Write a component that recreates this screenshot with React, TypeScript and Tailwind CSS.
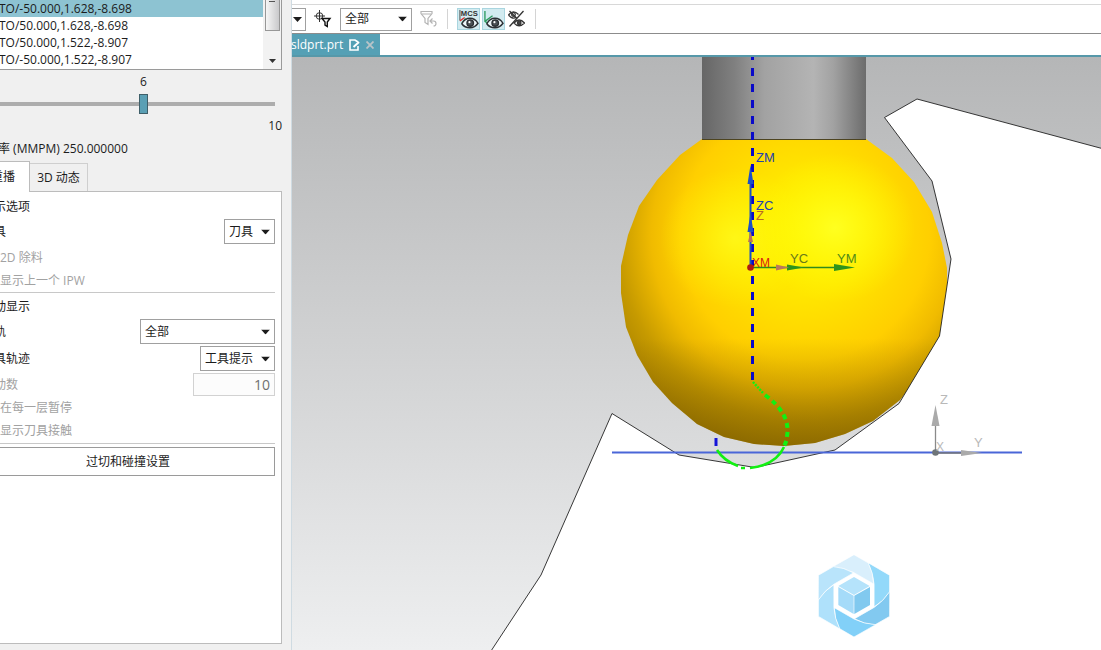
import { useState } from 'react';
import type { ReactNode } from 'react';

const PATH_LINES = [
    'TO/-50.000,1.628,-8.698',
    'TO/50.000,1.628,-8.698',
    'TO/50.000,1.522,-8.907',
    'TO/-50.000,1.522,-8.907',
];

function Caret({ className }: { className?: string }) {
    return (
        <svg className={className} width="9" height="5" viewBox="0 0 9 5" aria-hidden="true">
            <path d="M0 0h9L4.500 5z" fill="#1c1c1c" />
        </svg>
    );
}

function Dropdown({ id, label, options, className }: { id: string; label?: string; options: string[]; className: string }) {
    return (
        <div className={`relative shrink-0 ${className}`}>
            <select
                id={id}
                aria-label={label}
                className="block h-full w-full appearance-none border border-[#a0a0a0] bg-white pl-1 text-xs text-[#1c1c1c] outline-none"
            >
                {options.map((option) => (
                    <option key={option}>{option}</option>
                ))}
            </select>
            <Caret className="pointer-events-none absolute top-1/2 right-[5px] -translate-y-1/2" />
        </div>
    );
}

function Row({ htmlFor, label, children }: { htmlFor: string; label: string; children: ReactNode }) {
    return (
        <div className="flex h-[27px] items-start justify-between pl-[13px]">
            <label htmlFor={htmlFor} className="leading-[25px]">
                {label}
            </label>
            {children}
        </div>
    );
}

function DisabledCheck({ label }: { label: string }) {
    return (
        <label className="flex h-[23px] items-center gap-[7px] text-[#a2a2a2]">
            <input type="checkbox" disabled className="size-3" />
            {label}
        </label>
    );
}

function Sidebar() {
    const [selected, setSelected] = useState(0);
    const [speed, setSpeed] = useState(6);
    const [tab, setTab] = useState('replay');

    return (
        <aside className="flex w-[292px] shrink-0 overflow-hidden border-r border-[#cfdbe2] bg-[#f0f0f0]">
            <div className="-ml-5 flex flex-1 flex-col text-xs text-[#1c1c1c]">
                <div className="mr-[9px] flex border-b border-r border-[#9a9a9a] bg-white">
                    <ul className="flex-1 pb-px">
                        {PATH_LINES.map((line, i) => (
                            <li key={line}>
                                <button
                                    type="button"
                                    onClick={() => setSelected(i)}
                                    className={`block h-[17px] w-full pl-[19px] text-left leading-[17px] ${selected === i ? 'bg-[#8dc3d2]' : ''}`}
                                >
                                    {line}
                                </button>
                            </li>
                        ))}
                    </ul>
                    <div className="flex w-[18px] flex-col items-center justify-between bg-[#f2f2f2] pb-1.5">
                        <div className="flex h-[31px] w-[15px] justify-center border border-t-0 border-[#979797] bg-linear-to-r from-[#f6f6f6] to-[#c9c9cb]">
                            <span className="mt-px h-px w-1.5 bg-[#555]" />
                        </div>
                        <svg width="7" height="4" viewBox="0 0 7 4" aria-hidden="true">
                            <path d="M0 0h7L3.500 4z" fill="#333" />
                        </svg>
                    </div>
                </div>

                <div className="mr-4 flex flex-col pt-1">
                    <output htmlFor="speed" className="pl-8 text-center leading-4">
                        {speed}
                    </output>
                    <input
                        id="speed"
                        aria-label="速度"
                        type="range"
                        min={1}
                        max={10}
                        value={speed}
                        onChange={(e) => setSpeed(Number(e.target.value))}
                        className="mt-1 h-5 w-full appearance-none bg-transparent [&::-webkit-slider-runnable-track]:h-1 [&::-webkit-slider-runnable-track]:bg-[#adadad] [&::-webkit-slider-thumb]:-mt-2 [&::-webkit-slider-thumb]:h-5 [&::-webkit-slider-thumb]:w-[9px] [&::-webkit-slider-thumb]:appearance-none [&::-webkit-slider-thumb]:border [&::-webkit-slider-thumb]:border-[#3f5f69] [&::-webkit-slider-thumb]:bg-[#5a9fb4]"
                    />
                </div>
                <p className="mt-1 mr-[9px] text-right leading-4">10</p>
                <p className="mt-[5px] pl-[18px] leading-5">率 (MMPM) 250.000000</p>

                <div className="mt-0.5 flex items-end" role="tablist">
                    <button
                        type="button"
                        role="tab"
                        aria-selected={tab === 'replay'}
                        onClick={() => setTab('replay')}
                        className="relative z-10 -mb-px h-[31px] w-[50px] border border-b-0 border-[#bcbcbc] bg-white pl-2.5 text-left"
                    >
                        重播
                    </button>
                    <button
                        type="button"
                        role="tab"
                        aria-selected={tab === 'dynamic'}
                        onClick={() => setTab('dynamic')}
                        className="h-7 w-[58px] border border-b-0 border-l-0 border-[#cfcfcf] bg-[#f0f0f0]"
                    >
                        3D 动态
                    </button>
                </div>

                <div className="mr-[9px] mb-1.5 flex-1 border border-[#bcbcbc] bg-white pt-[3px] pr-1.5">
                    <h2 className="h-6 pl-[13px] leading-6">示选项</h2>
                    <Row htmlFor="tool" label="具">
                        <Dropdown id="tool" options={['刀具']} className="h-[25px] w-[51px]" />
                    </Row>
                    <DisabledCheck label="2D 除料" />
                    <DisabledCheck label="显示上一个 IPW" />
                    <hr className="border-[#c8c8c8]" />

                    <h2 className="mt-0.5 h-6 pl-[13px] leading-6">动显示</h2>
                    <Row htmlFor="rail" label="轨">
                        <Dropdown id="rail" options={['全部']} className="h-[25px] w-[135px]" />
                    </Row>
                    <Row htmlFor="trace" label="具轨迹">
                        <Dropdown id="trace" options={['工具提示']} className="h-[25px] w-[75px]" />
                    </Row>
                    <div className="flex h-[23px] items-center justify-between pl-[13px]">
                        <label htmlFor="moves" className="text-[#a2a2a2]">
                            动数
                        </label>
                        <input
                            id="moves"
                            type="text"
                            disabled
                            defaultValue="10"
                            className="h-full w-[82px] border border-[#d2d2d2] bg-[#fcfcfc] pr-1 text-right text-sm text-[#707070]"
                        />
                    </div>
                    <DisabledCheck label="在每一层暂停" />
                    <DisabledCheck label="显示刀具接触" />
                    <hr className="mt-px border-[#c8c8c8]" />
                    <button type="button" className="mt-[3px] h-[29px] w-full border border-[#9a9a9a] bg-white">
                        过切和碰撞设置
                    </button>
                </div>
            </div>
        </aside>
    );
}

function Eye() {
    return (
        <g fill="none" stroke="#2c3034" strokeWidth="1.500">
            <path d="M4 15.500C6.500 11 9.500 9.800 12.500 9.800s6 1.200 8.500 5.200c-2.500 3.500-5 4.700-8.500 4.700s-6.500-1.200-8.500-4.200z" fill="#eef7f9" />
            <circle cx="12.800" cy="14.800" r="3.400" fill="#4c5256" />
            <circle cx="12" cy="13.800" r="1.100" fill="#fff" stroke="none" />
        </g>
    );
}

function Toolbar() {
    return (
        <div className="mt-1 flex h-[30px] items-center border-t border-b border-t-[#d8d8d8] border-b-[#8c8c8c] bg-white">
            <button type="button" aria-label="选择" className="flex h-[23px] w-3.5 items-center justify-center border border-l-0 border-[#a0a0a0] pr-0.5">
                <Caret />
            </button>
            <button type="button" aria-label="过滤器" className="ml-2">
                <svg width="18" height="18" viewBox="0 0 18 18" fill="none" stroke="#333" strokeWidth="1">
                    <circle cx="5.500" cy="6" r="3.300" />
                    <path d="M5.500 0v12M0 6h11" />
                    <path d="M8 8.500h8l-2.700 3.500v4.500l-2.300-1.500v-3z" fill="#fff" stroke="#111" strokeWidth="1.400" />
                </svg>
            </button>
            <Dropdown id="scope" label="范围" options={['全部']} className="ml-2 h-[23px] w-[72px]" />
            <button type="button" aria-label="重置过滤器" className="ml-2">
                <svg width="18" height="18" viewBox="0 0 18 18" fill="none" stroke="#b4b4b4" strokeWidth="1.200">
                    <path d="M1 1.500h11v2L8 8.500v6l-3-2v-4l-4-5z" />
                    <path d="M2 4h9M12.500 8.500L10 11l2.500 2.500M10.500 11h3q2.500 0 2.500 2.500t-2.500 2.500" />
                </svg>
            </button>
            <span className="ml-[9px] h-5 w-px bg-[#d4d4d4]" />
            <button type="button" aria-label="显示 MCS" className="ml-[9px] border border-[#a9d5df] bg-[#d2ebf0]">
                <svg width="21" height="20" viewBox="0 0 22 21">
                    <path d="M2 1v11" stroke="#444" />
                    <path d="M2 12.500l5-3.500" stroke="#d33" strokeWidth="1.400" />
                    <path d="M4 15l4-5" stroke="#2d9a5f" strokeWidth="1.400" />
                    <text x="3" y="7" fontSize="8" fontWeight="700" fill="#333" fontFamily="Liberation Sans">MCS</text>
                    <Eye />
                </svg>
            </button>
            <button type="button" aria-label="显示 WCS" className="ml-0.5 border border-[#a9d5df] bg-[#d2ebf0]">
                <svg width="21" height="20" viewBox="0 0 22 21" fill="none">
                    <path d="M2 2v11l6 4M2 13l8-6" stroke="#2d9a5f" strokeWidth="1.400" />
                    <Eye />
                </svg>
            </button>
            <button type="button" aria-label="反转显示" className="ml-[3px]">
                <svg width="17" height="18" viewBox="0 0 17 18" fill="none" stroke="#333" strokeWidth="1.300">
                    <path d="M.5 5Q5-1 10.500 4.500M.5 5Q5 10 8 7M1.500 16.500L15.500 1M1.500 1l7 7" />
                    <circle cx="5.500" cy="4.500" r="1.800" />
                    <path d="M6 13q5-6 10.500 0-5.500 5.500-10.500 0z" />
                    <circle cx="11.200" cy="13" r="1.800" fill="#444" />
                </svg>
            </button>
            <span className="ml-2.5 h-5 w-px bg-[#d4d4d4]" />
        </div>
    );
}

function PartTab() {
    return (
        <div className="flex h-[23px] border-b-2 border-[#5698a9] bg-white">
            <div className="flex items-center bg-[#55a0b5] pr-1.5 text-xs text-white">
                <span className="-ml-px leading-5">sldprt.prt</span>
                <svg className="ml-1.5" width="11" height="12" viewBox="0 0 11 12" fill="none" stroke="#fff" strokeWidth="1.600">
                    <path d="M9 7v4H1V1h5l3 2" />
                    <path d="M4.500 8L10 3" strokeWidth="2" />
                </svg>
                <button type="button" aria-label="关闭" className="ml-1.5">
                    <svg width="8" height="8" viewBox="0 0 8 8" stroke="#b9c4c8" strokeWidth="1.800">
                        <path d="M.5.5l7 7m0-7l-7 7" />
                    </svg>
                </button>
            </div>
        </div>
    );
}

const BLADES = [
    { fill: '#d9effc', rotate: 0 },
    { fill: '#93d9fa', rotate: 60 },
    { fill: '#82c9f0', rotate: 120 },
    { fill: '#82d0f8', rotate: 180 },
    { fill: '#afe1fb', rotate: 240 },
    { fill: '#b9e4fb', rotate: 300 },
];

function Logo() {
    return (
        <g transform="translate(800 540) scale(.3333)">
            {BLADES.map((blade) => (
                <path
                    key={blade.rotate}
                    d="M97 81L162 44l45 26q14 29 14 62L162 98Q132 83 97 81z"
                    fill={blade.fill}
                    stroke="#fff"
                    strokeWidth="2"
                    transform={`rotate(${blade.rotate} 162 167.500)`}
                />
            ))}
            <path d="M162 102l57 33v65l-57 34-57-34v-65z" fill="#fff" />
            <path d="M162 111l47 27-47 27-47-27z" fill="#b5e3fb" />
            <path d="M115 141l46 26v55l-46-27z" fill="#a5dbf9" />
            <path d="M210 141l-47 26v55l47-27z" fill="#81c9ef" />
        </g>
    );
}

function Scene() {
    return (
        <svg className="min-h-0 w-full flex-1" viewBox="292 57 809 593" preserveAspectRatio="xMinYMin slice" fontFamily="Liberation Sans" fontSize="13">
            <defs>
                <linearGradient id="sky" x1="0" y1="0" x2="0" y2="1">
                    <stop offset="0" stopColor="#b5b6b7" />
                    <stop offset=".55" stopColor="#d4d5d6" />
                    <stop offset="1" stopColor="#eeeff0" />
                </linearGradient>
                <linearGradient id="shaft">
                    <stop offset="0" stopColor="#666" />
                    <stop offset=".2" stopColor="#808080" />
                    <stop offset=".38" stopColor="#a2a2a2" />
                    <stop offset=".68" stopColor="#b4b4b4" />
                    <stop offset=".8" stopColor="#a2a2a2" />
                    <stop offset="1" stopColor="#6c6c6c" />
                </linearGradient>
                <radialGradient id="ball" gradientUnits="userSpaceOnUse" cx="805" cy="235" r="240">
                    <stop offset="0" stopColor="#fff000" />
                    <stop offset=".25" stopColor="#ffe600" />
                    <stop offset=".52" stopColor="#ffcf00" />
                    <stop offset=".64" stopColor="#f0bb00" />
                    <stop offset=".78" stopColor="#c69a00" />
                    <stop offset="1" stopColor="#977300" />
                </radialGradient>
                <radialGradient id="glow">
                    <stop offset="0" stopColor="#ffff20" />
                    <stop offset="1" stopColor="#ffff00" stopOpacity="0" />
                </radialGradient>
                <linearGradient id="shade" x1="0" y1="0" x2="0" y2="1">
                    <stop offset=".65" stopColor="#6b4e00" stopOpacity="0" />
                    <stop offset="1" stopColor="#6b4e00" stopOpacity=".5" />
                </linearGradient>
                <path id="ballShape" d="M702 139L680 155 657 180 639 206 628 235 621 266 621 293 626 327 637 355 653 382 672 403 697 424 724 437 754 444 784 446 815 443 845 434 873 421 900 400 922 372 939 340 947 305 947 268 942 243 932 212 914 182 892 158 866 139z" />
            </defs>

            <rect x="292" y="57" width="809" height="593" fill="url(#sky)" />
            <path d="M702 57h164v82H702z" fill="url(#shaft)" />
            <use href="#ballShape" fill="url(#ball)" />
            <ellipse cx="735" cy="238" rx="75" ry="70" fill="url(#glow)" opacity=".7" />
            <ellipse cx="835" cy="228" rx="80" ry="75" fill="url(#glow)" />
            <use href="#ballShape" fill="url(#shade)" />
            <path d="M702 139.500h164" stroke="#4d4420" />

            <path
                d="M491 651L541 575 612 413.500 679 455 755 467.500 835 450 899 403.500 939.500 336 951 259 932 181 884.500 117.500 917 99 1102 148.500V651z"
                fill="#fff"
                stroke="#222"
                strokeWidth=".900"
            />
            <path d="M612 452.500h410" stroke="#4a66d8" strokeWidth="1.800" />

            {/* tool path */}
            <path d="M752.500 52V380" stroke="#0a0ac8" strokeWidth="3" strokeDasharray="8 8" />
            <path d="M716 438v8" stroke="#1414d8" strokeWidth="3" />
            <g fill="none" stroke="#12f012">
                <path d="M753 382l10 11" strokeWidth="2.500" strokeDasharray="2 1.200" />
                <path d="M765 395Q791 414 787 436 787 441 784 446" strokeWidth="4" strokeDasharray="5 4" />
                <path d="M784 447Q776 465 750 468M745 468h-4M738 466Q724 461 717 450" strokeWidth="2.600" />
            </g>

            {/* machine axes */}
            <path d="M750.500 267V180" stroke="#1c4fc0" strokeWidth="2" />
            <path d="M750.500 165l3 19h-6zM750.500 213l3 19h-6z" fill="#1c50c8" />
            <path d="M750.500 231l2.500 11h-5z" fill="#b9725c" />
            <path d="M751 267.500h86" stroke="#2f8a1c" strokeWidth="1.600" />
            <path d="M855 267.500l-21-3.500v7zM804 267.500l-17-3v6z" fill="#2f941c" />
            <path d="M789 267.500l-13-3v6z" fill="#b9785c" />
            <circle cx="750.500" cy="267.500" r="3.300" fill="#b01a10" />
            <text x="756" y="162" fill="#2342b0">ZM</text>
            <text x="756" y="210" fill="#2342b0">ZC</text>
            <text x="756" y="220" fill="#b86a28">Z</text>
            <text x="790" y="263" fill="#6a7a18">YC</text>
            <text x="837" y="263" fill="#4f8a18">YM</text>
            <text x="752" y="267" fill="#d82010" fontSize="12">XM</text>

            {/* reference axes */}
            <g fill="#b9b9b9">
                <path d="M935.500 452V426" stroke="#8a8a8a" strokeWidth="1.300" />
                <path d="M935.500 405l4 21h-8z" fill="#aaa" />
                <path d="M936 453h26" stroke="#777" strokeWidth="1.500" />
                <path d="M982 453l-21-3v6z" fill="#aaa" />
                <circle cx="935.500" cy="452.500" r="3.300" fill="#6e7478" />
                <text x="940" y="404">Z</text>
                <text x="974" y="447">Y</text>
                <text x="936" y="451" fontSize="12">X</text>
            </g>

            <Logo />
        </svg>
    );
}

export default function App() {
    return (
        <div className="flex h-screen overflow-hidden bg-white font-['Open_Sans','Noto_Sans_CJK_SC',sans-serif]">
            <Sidebar />
            <main className="flex min-w-0 flex-1 flex-col">
                <Toolbar />
                <PartTab />
                <Scene />
            </main>
        </div>
    );
}
